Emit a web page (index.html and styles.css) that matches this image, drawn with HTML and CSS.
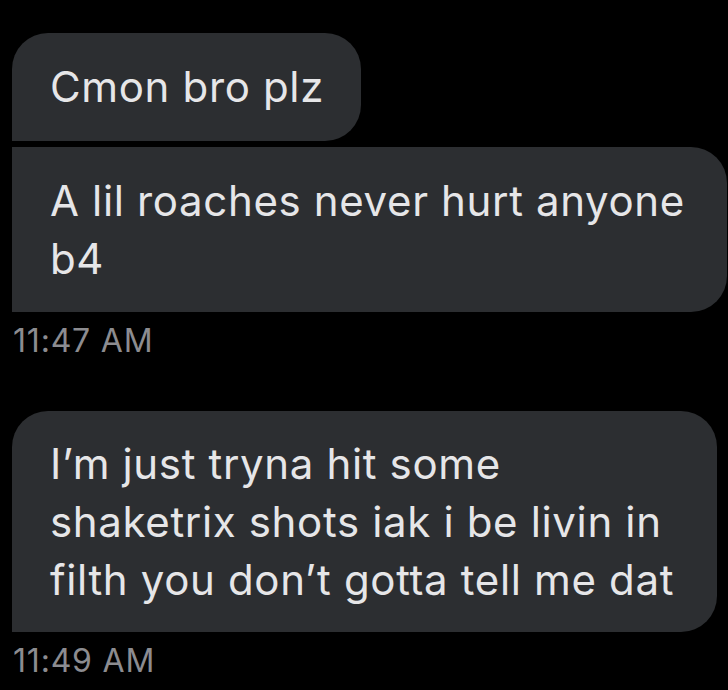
FILE: index.html
```html
<!DOCTYPE html>
<html lang="en">
<head>
<meta charset="utf-8">
<title>Messages</title>
<link rel="stylesheet" href="styles.css">
</head>
<body>
<main class="thread">
  <div class="group">
    <div class="bubble first">Cmon bro plz</div>
    <div class="bubble last wide">A lil roaches never hurt anyone<br>b4</div>
    <div class="time">11:47 AM</div>
  </div>
  <div class="group">
    <div class="bubble single wide-2">I’m just tryna hit some<br>shaketrix shots iak i be livin in<br>filth you don’t gotta tell me dat</div>
    <div class="time">11:49 AM</div>
  </div>
</main>
</body>
</html>
```

FILE: styles.css
```css
* { box-sizing: border-box; }
html, body {
  margin: 0;
  padding: 0;
  background: #000;
}
body {
  width: 728px;
  height: 690px;
  overflow: hidden;
  font-family: "Inter", "Liberation Sans", sans-serif;
}
.thread {
  display: flex;
  flex-direction: column;
  gap: 50px;
  padding: 33px 0 0 12px;
}
.group {
  display: flex;
  flex-direction: column;
  align-items: flex-start;
  gap: 6px;
}
.bubble {
  background: #2c2e31;
  color: #e6e6e8;
  font-size: 42px;
  line-height: 58px;
  letter-spacing: 0.65px;
  padding: 25px 37px 25px 38px;
  border-radius: 36px;
  white-space: nowrap;
}
.bubble.first {
  border-bottom-left-radius: 0;
}
.bubble.last {
  border-top-left-radius: 0;
  border-bottom-left-radius: 0;
  padding-bottom: 24px;
}
.bubble.single {
  border-bottom-left-radius: 0;
  padding: 24px 38px 23px 38px;
}
.bubble.wide { width: 715px; }
.bubble.wide-2 { width: 705px; }
.time {
  color: #8c8c90;
  font-size: 32px;
  line-height: 40px;
  letter-spacing: 0.8px;
  margin-top: 3px;
  padding-left: 1px;
}
```
